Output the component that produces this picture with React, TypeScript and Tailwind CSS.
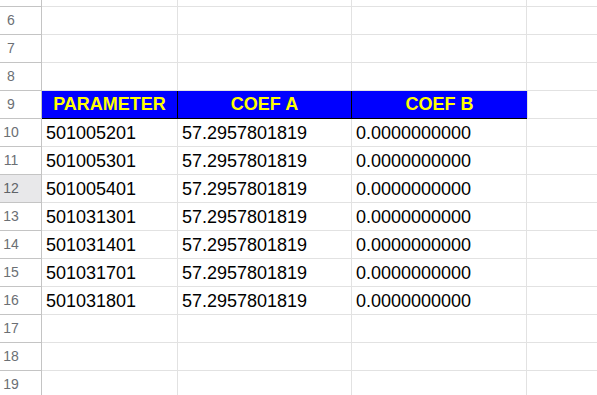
import React from "react";

const rows = [
	{ n: 10, a: "501005201", b: "57.2957801819", c: "0.0000000000" },
	{ n: 11, a: "501005301", b: "57.2957801819", c: "0.0000000000" },
	{ n: 12, a: "501005401", b: "57.2957801819", c: "0.0000000000" },
	{ n: 13, a: "501031301", b: "57.2957801819", c: "0.0000000000" },
	{ n: 14, a: "501031401", b: "57.2957801819", c: "0.0000000000" },
	{ n: 15, a: "501031701", b: "57.2957801819", c: "0.0000000000" },
	{ n: 16, a: "501031801", b: "57.2957801819", c: "0.0000000000" },
];

const font = { fontFamily: '"Liberation Sans", Arial, sans-serif' };

function RowHead({ n, active }: { n?: number; active?: boolean }) {
	return (
		<div
			className={`flex w-[42px] shrink-0 items-center border-r border-b border-[#c4c4c4] text-[14px] ${
				active ? "bg-[#e8e8ea] text-[#5f6368]" : "bg-white text-[#6b6f74]"
			}`}
		>
			<span className="w-[22px] text-center">{n}</span>
		</div>
	);
}

function Cell({ w, children }: { w: string; children?: React.ReactNode }) {
	return (
		<div
			className={`flex ${w} shrink-0 items-end overflow-hidden whitespace-nowrap border-r border-b border-[#e2e2e2] pb-[2px] pl-[4px] text-[18px] leading-[21px] text-black`}
		>
			{children}
		</div>
	);
}

function EmptyRow({ n, h = "h-[28px]" }: { n?: number; h?: string }) {
	return (
		<div className={`flex ${h}`}>
			<RowHead n={n} />
			<Cell w="w-[136px]" />
			<Cell w="w-[174px]" />
			<Cell w="w-[175px]" />
			<div className="flex-1 border-b border-[#e2e2e2]" />
		</div>
	);
}

export default function App() {
	return (
		<div className="h-[395px] w-[597px] overflow-hidden bg-white" style={font}>
			<EmptyRow h="h-[7px]" />
			<EmptyRow n={6} />
			<EmptyRow n={7} />
			<EmptyRow n={8} />

			{/* Header row */}
			<div className="flex h-[28px]">
				<RowHead n={9} />
				<div className="flex w-[136px] shrink-0 items-center justify-center border-r border-b border-black bg-[#0000ff] text-[18px] font-bold leading-[21px] text-[#ffff00]">
					PARAMETER
				</div>
				<div className="flex w-[174px] shrink-0 items-center justify-center border-r border-b border-black bg-[#0000ff] text-[18px] font-bold leading-[21px] text-[#ffff00]">
					COEF A
				</div>
				<div className="flex w-[175px] shrink-0 items-center justify-center border-b border-black bg-[#0000ff] text-[18px] font-bold leading-[21px] text-[#ffff00]">
					COEF B
				</div>
				<div className="flex-1 border-b border-l border-[#e2e2e2]" />
			</div>

			{rows.map((r) => (
				<div key={r.n} className="flex h-[28px]">
					<RowHead n={r.n} active={r.n === 12} />
					<Cell w="w-[136px]">{r.a}</Cell>
					<Cell w="w-[174px]">{r.b}</Cell>
					<Cell w="w-[175px]">{r.c}</Cell>
					<div className="flex-1 border-b border-[#e2e2e2]" />
				</div>
			))}

			<EmptyRow n={17} />
			<EmptyRow n={18} />
			<EmptyRow n={19} />
		</div>
	);
}
